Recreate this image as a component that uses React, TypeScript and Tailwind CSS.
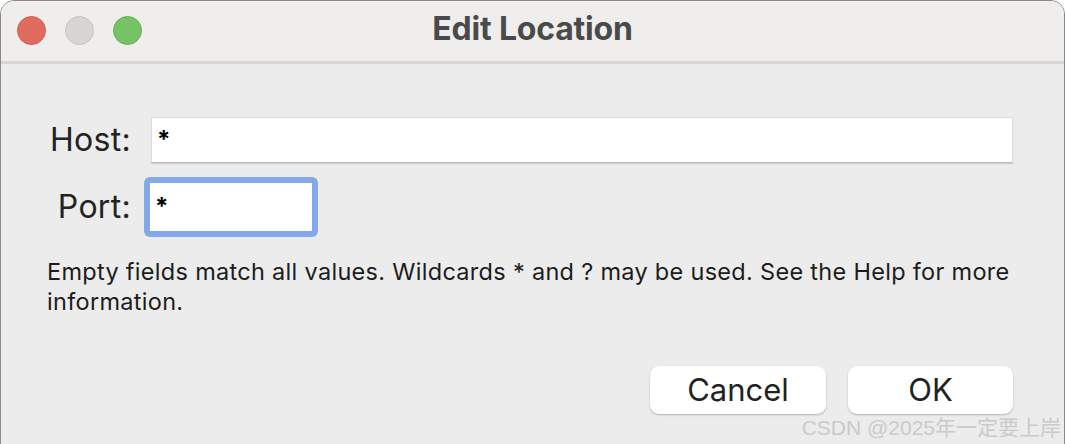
export default function App() {
    return (
        <div className="w-[1066px] h-[444px] bg-white overflow-hidden" style={{ fontFamily: 'Inter, "Noto Sans CJK SC", sans-serif' }}>
            <div className="w-[1065px] h-[460px] rounded-t-[14px] border border-[#8a8a8a] bg-[#ececec] overflow-hidden flex flex-col">
                {/* Title bar */}
                <div className="relative h-[63px] bg-[#efeeec] border-b-[3px] border-[#d6d5d3] flex items-center justify-center shrink-0">
                    <div className="absolute left-[16px] top-[15px] flex gap-[19px]">
                        <span className="w-[29px] h-[29px] rounded-full bg-[#e06c60] border border-[#cf5d52]" />
                        <span className="w-[29px] h-[29px] rounded-full bg-[#d7d6d4] border border-[#c4c3c1]" />
                        <span className="w-[29px] h-[29px] rounded-full bg-[#76c365] border border-[#64b055]" />
                    </div>
                    <span className="text-[32px] leading-[40px] font-bold text-[#4a4a4a] tracking-[-0.2px] mt-[-5px]">Edit Location</span>
                </div>

                {/* Body */}
                <div className="flex flex-col pl-[45px] pr-[51px] pt-[53px]">
                    <div className="flex items-center h-[46px]">
                        <span className="w-[86px] text-right text-[32px] leading-[40px] text-[#232323] pr-[1px] tracking-[0.3px]">Host:</span>
                        <div className="ml-[19px] flex-1 h-[46px] bg-white border border-[#dcdcdc] border-b-[#bdbdbd] shadow-[0_1px_1px_rgba(0,0,0,0.12)] flex items-center pl-[5px]">
                            <span className="text-[24px] font-bold text-black">*</span>
                        </div>
                    </div>
                    <div className="flex items-center mt-[14px] h-[60px]">
                        <span className="w-[86px] text-right text-[32px] leading-[40px] text-[#232323] pr-[1px] tracking-[0.3px]">Port:</span>
                        <div className="ml-[12px] w-[174px] h-[60px] rounded-[6px] bg-[#84a9ea] p-[6px]">
                            <div className="w-full h-full bg-white flex items-center pl-[5px]">
                                <span className="text-[24px] font-bold text-black">*</span>
                            </div>
                        </div>
                    </div>
                    <p className="mt-[20px] text-[23.5px] leading-[30px] tracking-[0.3px] text-[#1c1c1c] max-w-[990px] ml-[1px]">
                        Empty fields match all values. Wildcards * and ? may be used. See the Help for more information.
                    </p>
                    <div className="flex justify-end gap-[22px] mt-[49px]">
                        <button className="w-[176px] h-[48px] rounded-[9px] bg-white shadow-[0_1px_2px_rgba(0,0,0,0.25)] text-[31px] text-[#222]">Cancel</button>
                        <button className="w-[165px] h-[48px] rounded-[9px] bg-white shadow-[0_1px_2px_rgba(0,0,0,0.25)] text-[31px] text-[#222]">OK</button>
                    </div>
                    <div className="flex justify-end -mr-[48px] mt-[1px]">
                        <span className="text-[21px] leading-[26px] text-[#cacaca]" style={{ fontFamily: '"Liberation Sans", "Noto Sans CJK SC", sans-serif' }}>CSDN @2025年一定要上岸</span>
                    </div>
                </div>
            </div>
        </div>
    );
}
